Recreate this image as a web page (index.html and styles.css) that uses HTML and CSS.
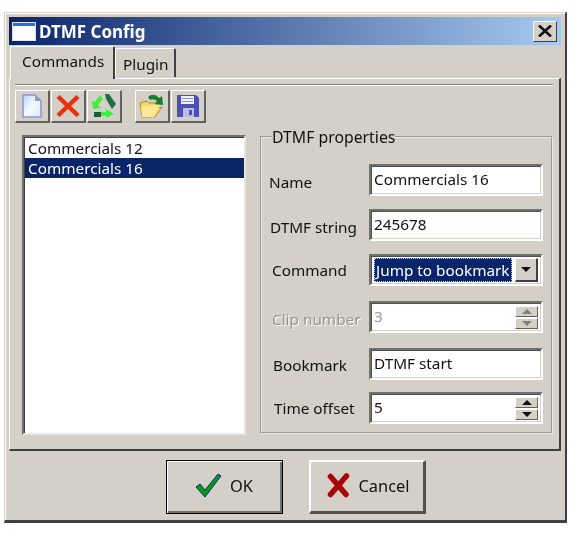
FILE: index.html
```html
<!DOCTYPE html>
<html>
	<head>
		<meta charset="utf-8" />
		<link rel="stylesheet" href="styles.css">
		<title>DTMF Config</title>
	</head>
	<body>
		<div class="window">
			<div class="titlebar">
				<svg class="title-icon" width="24" height="19" viewBox="0 0 24 19">
					<rect x="0.5" y="0.5" width="23" height="18" fill="#fff" stroke="#d8e4f4"/>
					<rect x="1" y="1" width="22" height="3" fill="#2a6fd0"/>
				</svg>
				<span class="title-text">DTMF Config</span>
				<div class="close">
					<svg width="14" height="12" viewBox="0 0 14 12"><path d="M1 0.5 L13 11.5 M13 0.5 L1 11.5" stroke="#111" stroke-width="2.6" fill="none"/></svg>
				</div>
			</div>

			<div class="tabs">
				<div class="tab tab-active">Commands</div>
				<div class="tab">Plugin</div>
			</div>

			<div class="page">
				<div class="toolbar">
					<div class="tool">
						<svg width="20" height="24" viewBox="0 0 20 24">
							<defs><linearGradient id="doc" x1="0" y1="0" x2="1" y2="1"><stop offset="0" stop-color="#b8d4f8"/><stop offset=".5" stop-color="#f4f9ff"/><stop offset="1" stop-color="#dbe8fa"/></linearGradient></defs>
							<path d="M1 1 H13 L19 7 V23 H1 Z" fill="url(#doc)" stroke="#8c96cc" stroke-width="1.5"/>
							<path d="M13 1 V7 H19 Z" fill="#8a9ad8"/>
						</svg>
					</div>
					<div class="tool">
						<svg width="24" height="22" viewBox="0 0 24 22"><path d="M2 1.5 L22 20.5 M22 1.5 L2 20.5" stroke="#e8320e" stroke-width="4.4" fill="none"/></svg>
					</div>
					<div class="tool">
						<svg width="26" height="26" viewBox="0 0 26 26">
							<path d="M14 1 L18 1 L25 11 L21 16 L15 6 Z" fill="#1f6f46"/>
							<path d="M9 2 L12 6 L7 12 L10 15 L2 16 L1 8 L4 9 Z" fill="#3cf03c"/>
							<path d="M10 19 H15 V16 L23 21 L15 25 V23 H10 Z" fill="#3cf03c"/>
							<path d="M3 19 H10 V24 H3 Z" fill="#17603a"/>
						</svg>
					</div>
					<div class="tool tool-gap">
						<svg width="26" height="26" viewBox="0 0 26 26">
							<path d="M1 10 L8 8 L10 10 L18 10 L18 15 L23 14 L16 24 L3 24 Z" fill="#f5d76a" stroke="#b08a28"/>
							<path d="M2 14 L21 12 L15 24 L3 24 Z" fill="#fbe894"/>
							<path d="M9 4 Q15 -1 20 5 L23 3 L24 12 L16 11 L18 8 Q14 5 11 7 Z" fill="#14802c"/>
						</svg>
					</div>
					<div class="tool">
						<svg width="22" height="22" viewBox="0 0 22 22">
							<path d="M0 0 H19 L22 3 V22 H0 Z" fill="#4a50b4"/>
							<rect x="4" y="1" width="13" height="8" fill="#eef0fa"/>
							<rect x="5" y="3" width="11" height="1" fill="#8a90d0"/>
							<rect x="5" y="6" width="11" height="1" fill="#8a90d0"/>
							<rect x="6" y="13" width="11" height="9" fill="#b9bde6"/>
							<rect x="12" y="15" width="3" height="5" fill="#4a50b4"/>
						</svg>
					</div>
				</div>

				<div class="content">
					<div class="listbox">
						<div class="item">Commercials 12</div>
						<div class="item item-selected">Commercials 16</div>
					</div>

					<fieldset class="props">
						<legend>DTMF properties</legend>
						<div class="row">
							<span class="label label-low">Name</span>
							<div class="field">Commercials 16</div>
						</div>
						<div class="row">
							<span class="label label-low label-dtmf">DTMF string</span>
							<div class="field">245678</div>
						</div>
						<div class="row row-tall">
							<span class="label label-in">Command</span>
							<div class="field combo">
								<span class="combo-value"><span class="combo-text">Jump to bookmark</span></span>
								<div class="drop"><i class="arrow-down"></i></div>
							</div>
						</div>
						<div class="row row-tall">
							<span class="label label-in label-disabled">Clip number</span>
							<div class="field field-disabled">
								3
								<div class="spin spin-disabled">
									<div class="spin-btn"><i class="arrow-up"></i></div>
									<div class="spin-btn"><i class="arrow-down"></i></div>
								</div>
							</div>
						</div>
						<div class="row row-short">
							<span class="label label-in2">Bookmark</span>
							<div class="field">DTMF start</div>
						</div>
						<div class="row">
							<span class="label label-in3">Time offset</span>
							<div class="field">
								5
								<div class="spin">
									<div class="spin-btn"><i class="arrow-up"></i></div>
									<div class="spin-btn"><i class="arrow-down"></i></div>
								</div>
							</div>
						</div>
					</fieldset>
				</div>
			</div>

			<div class="footer">
				<div class="btn btn-default">
					<svg width="27" height="25" viewBox="0 0 27 25">
						<path d="M1 14 L5 11 L10 17 L23 1 L26 3 L10 24 Z" fill="#0a9a12" stroke="#102a8a" stroke-width="1"/>
					</svg>
					<span>OK</span>
				</div>
				<div class="btn btn-cancel">
					<svg width="23" height="25" viewBox="0 0 23 25"><path d="M3.5 3.5 L19 21.5 M19.5 3 L3.5 21.5" stroke="#a80408" stroke-width="5.6" stroke-linecap="round" fill="none"/></svg>
					<span>Cancel</span>
				</div>
			</div>
		</div>
	</body>
</html>
```
FILE: styles.css
```css
body,html{
	margin:0;
	padding:0;
	background-color:#fff;
}
body{
	padding:12px 0 0 4px;
	font-family:"Noto Sans","Liberation Sans",sans-serif;
	font-size:15.3px;
	color:#111;
}
.window{
	box-sizing:border-box;
	width:563px;
	height:511px;
	padding:4px 4px 0 4px;
	background-color:#d4d0c8;
	border-top:1px solid #d4d0c8;
	border-left:1px solid #d4d0c8;
	border-right:2px solid #404040;
	border-bottom:3px solid #404040;
	box-shadow:inset 1px 1px #fff;
	filter:blur(.45px);
}
.titlebar{
	display:flex;
	align-items:center;
	height:28px;
	padding:0 4px 0 3px;
	background:linear-gradient(to right,#0a246a,#a6caf0);
	color:#fff;
}
.title-icon{
	margin-right:3px;
}
.title-text{
	flex:1;
	font-size:17px;
	font-weight:bold;
}
.close{
	display:flex;
	align-items:center;
	justify-content:center;
	box-sizing:border-box;
	width:24px;
	height:21px;
	background-color:#d4d0c8;
	border:1px solid;
	border-color:#fff #404040 #404040 #fff;
}
.tabs{
	display:flex;
	align-items:flex-end;
	height:33px;
	padding-left:1px;
	position:relative;
	z-index:1;
}
.tab{
	box-sizing:border-box;
	height:29px;
	margin-bottom:1px;
	padding:5px 6px 0 7px;
	background-color:#d4d0c8;
	border:1px solid;
	border-width:1px 2px 0 1px;
	border-color:#fff #404040 #d4d0c8 #fff;
	border-radius:2px 2px 0 0;
}
.tab-active{
	width:105px;
	height:33px;
	margin-bottom:-1px;
	padding:4px 0 0 11px;
}
.page{
	box-sizing:border-box;
	height:373px;
	padding:5px 6px 0 5px;
	border:1px solid;
	border-width:1px 2px 2px 1px;
	border-color:#fff #404040 #404040 #fff;
}
.toolbar{
	display:flex;
	height:33px;
	padding-top:5px;
	border-top:1px solid #808080;
	box-shadow:inset 0 1px #fff;
}
.tool{
	display:flex;
	align-items:center;
	justify-content:center;
	box-sizing:border-box;
	width:35px;
	height:33px;
	margin-right:1px;
	border:1px solid;
	border-width:1px 2px 2px 1px;
	border-color:#fff #606060 #606060 #fff;
}
.tool-gap{
	margin-left:12px;
}
.content{
	display:flex;
	align-items:flex-start;
	padding:12px 0 0 7px;
}
.listbox{
	box-sizing:border-box;
	width:224px;
	height:300px;
	padding:1px 0 0 1px;
	background-color:#fff;
	border:2px solid;
	border-color:#707070 #e8e6e0 #e8e6e0 #707070;
	box-shadow:inset 1px 1px #404040;
}
.item{
	height:20px;
	padding-left:3px;
	line-height:21px;
	color:#111;
}
.item-selected{
	background-color:#0a246a;
	color:#fff;
}
.props{
	box-sizing:border-box;
	width:293px;
	height:308px;
	min-width:0;
	margin:-9px 0 0 14px;
	padding:16px 0 0 7px;
	border:2px groove #ece9e2;
}
.props legend{
	margin-left:3px;
	padding:0;
	font-size:15.8px;
	line-height:22px;
}
.row{
	display:flex;
	justify-content:space-between;
	align-items:flex-start;
	height:45px;
	padding-right:8px;
}
.row-tall{
	height:47px;
}
.row-short{
	height:44px;
}
.row:last-child{
	height:32px;
}
.label{
	padding-top:6px;
}
.label-low{
	padding-top:8px;
}
.label-dtmf{
	margin-left:1px;
}
.label-in{
	margin-left:3px;
}
.label-in2{
	margin-left:4px;
	padding-top:7px;
}
.label-in3{
	margin-left:5px;
}
.label-disabled{
	padding-top:8px;
	color:#9a968e;
	text-shadow:1px 1px #fff;
}
.field{
	display:flex;
	flex:none;
	align-items:center;
	justify-content:space-between;
	box-sizing:border-box;
	width:174px;
	height:32px;
	padding:0 3px 2px 3px;
	background-color:#fff;
	border:2px solid;
	border-color:#707070 #fff #fff #707070;
	box-shadow:inset 1px 1px #505050,inset -1px -1px #d4d0c8;
}
.field-disabled{
	color:#9a968e;
}
.combo{
	padding:3px;
}
.combo-value{
	flex:1;
	box-sizing:border-box;
	height:24px;
	margin-right:3px;
	line-height:22px;
	color:#fff;
	background-color:#0a246a;
	border:1px dotted #e8d878;
	white-space:nowrap;
	overflow:hidden;
}
.combo-text{
	margin-left:1px;
}
.drop{
	display:flex;
	flex:none;
	align-items:center;
	justify-content:center;
	box-sizing:border-box;
	width:23px;
	height:24px;
	background-color:#d4d0c8;
	border:1px solid;
	border-width:1px 2px 2px 1px;
	border-color:#fff #404040 #404040 #fff;
}
.spin{
	display:flex;
	flex-direction:column;
	gap:1px;
	width:23px;
	margin-top:2px;
}
.spin-btn{
	display:flex;
	align-items:center;
	justify-content:center;
	box-sizing:border-box;
	height:11px;
	background-color:#d4d0c8;
	border:1px solid;
	border-color:#fff #606060 #606060 #fff;
}
.arrow-down,.arrow-up{
	display:block;
	width:0;
	height:0;
	border-left:5px solid transparent;
	border-right:5px solid transparent;
}
.arrow-down{
	border-top:5px solid #111;
}
.arrow-up{
	border-bottom:5px solid #111;
}
.spin-disabled .arrow-down{
	border-top-color:#808080;
}
.spin-disabled .arrow-up{
	border-bottom-color:#808080;
}
.footer{
	display:flex;
	justify-content:center;
	gap:26px;
	padding:9px 0 0 21px;
}
.btn{
	display:flex;
	align-items:center;
	justify-content:center;
	gap:8px;
	box-sizing:border-box;
	width:117px;
	height:54px;
	padding-bottom:3px;
	font-size:16.4px;
	border:1px solid;
	border-width:2px 3px 3px 2px;
	border-color:#fff #505050 #505050 #fff;
}
.btn-default{
	border:1px solid #000;
	box-shadow:inset 1px 1px #fff,inset -2px -2px #707070;
}
.btn-cancel{
	padding-left:4px;
}
```
